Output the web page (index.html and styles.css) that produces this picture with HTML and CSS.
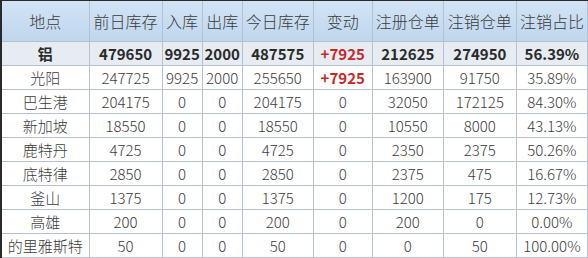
FILE: index.html
```html
<!DOCTYPE html>
<html lang="zh-CN">
<head>
  <meta charset="UTF-8">
  <meta name="viewport" content="width=device-width, initial-scale=1.0">
  <title>仓单日报</title>
  <link rel="stylesheet" href="styles.css">
</head>
<body>
  <div id="board">
    <table class="stock">
      <colgroup>
        <col class="c-site">
        <col class="c-wide">
        <col class="c-narrow">
        <col class="c-narrow">
        <col class="c-mid">
        <col class="c-change">
        <col class="c-mid">
        <col class="c-wide">
        <col class="c-mid">
      </colgroup>
      <thead>
        <tr>
          <th>地点</th>
          <th>前日库存</th>
          <th>入库</th>
          <th>出库</th>
          <th>今日库存</th>
          <th>变动</th>
          <th>注册仓单</th>
          <th>注销仓单</th>
          <th>注销占比</th>
        </tr>
      </thead>
      <tbody>
        <tr class="total">
          <td>铝</td>
          <td>479650</td>
          <td>9925</td>
          <td>2000</td>
          <td>487575</td>
          <td class="up">+7925</td>
          <td>212625</td>
          <td>274950</td>
          <td>56.39%</td>
        </tr>
        <tr>
          <td>光阳</td>
          <td>247725</td>
          <td>9925</td>
          <td>2000</td>
          <td>255650</td>
          <td class="up">+7925</td>
          <td>163900</td>
          <td>91750</td>
          <td>35.89%</td>
        </tr>
        <tr>
          <td>巴生港</td>
          <td>204175</td>
          <td>0</td>
          <td>0</td>
          <td>204175</td>
          <td>0</td>
          <td>32050</td>
          <td>172125</td>
          <td>84.30%</td>
        </tr>
        <tr>
          <td>新加坡</td>
          <td>18550</td>
          <td>0</td>
          <td>0</td>
          <td>18550</td>
          <td>0</td>
          <td>10550</td>
          <td>8000</td>
          <td>43.13%</td>
        </tr>
        <tr>
          <td>鹿特丹</td>
          <td>4725</td>
          <td>0</td>
          <td>0</td>
          <td>4725</td>
          <td>0</td>
          <td>2350</td>
          <td>2375</td>
          <td>50.26%</td>
        </tr>
        <tr>
          <td>底特律</td>
          <td>2850</td>
          <td>0</td>
          <td>0</td>
          <td>2850</td>
          <td>0</td>
          <td>2375</td>
          <td>475</td>
          <td>16.67%</td>
        </tr>
        <tr>
          <td>釜山</td>
          <td>1375</td>
          <td>0</td>
          <td>0</td>
          <td>1375</td>
          <td>0</td>
          <td>1200</td>
          <td>175</td>
          <td>12.73%</td>
        </tr>
        <tr>
          <td>高雄</td>
          <td>200</td>
          <td>0</td>
          <td>0</td>
          <td>200</td>
          <td>0</td>
          <td>200</td>
          <td>0</td>
          <td>0.00%</td>
        </tr>
        <tr>
          <td>的里雅斯特</td>
          <td>50</td>
          <td>0</td>
          <td>0</td>
          <td>50</td>
          <td>0</td>
          <td>0</td>
          <td>50</td>
          <td>100.00%</td>
        </tr>
      </tbody>
    </table>
  </div>
</body>
</html>
```

FILE: styles.css
```css
body {
  margin: 0;
  background-color: #fff;
  font-family: "Noto Sans CJK SC", "Noto Sans", sans-serif;
}
#board {
  width: 586px;
  border-top: 1px solid #2a2a2a;
  border-left: 2px solid #2a2a2a;
}
.stock {
  width: 586px;
  border-collapse: collapse;
  table-layout: fixed;
  font-size: 15px;
  font-weight: 300;
  color: #3c3c3c;
}
.c-site { width: 87px; }
.c-wide { width: 73px; }
.c-narrow { width: 40px; }
.c-mid { width: 71px; }
.c-change { width: 59px; }
.stock th,
.stock td {
  border: 1px solid #b3c1d1;
  text-align: center;
  padding: 0;
  white-space: nowrap;
  overflow: hidden;
}
.stock thead tr > th { border-top: none; }
.stock tr > :first-child { border-left: none; }
.stock th {
  height: 40px;
  font-weight: 300;
  font-size: 16px;
  color: #3a3a3a;
  background: linear-gradient(#d2e4f5, #bfd6ee);
}
.stock td {
  height: 23px;
  line-height: 22px;
}
.stock .total td {
  background-color: #e7ecf2;
  font-weight: bold;
  color: #2a2a2a;
}
.stock td.up {
  color: #c22a2a;
  font-weight: bold;
}
```
